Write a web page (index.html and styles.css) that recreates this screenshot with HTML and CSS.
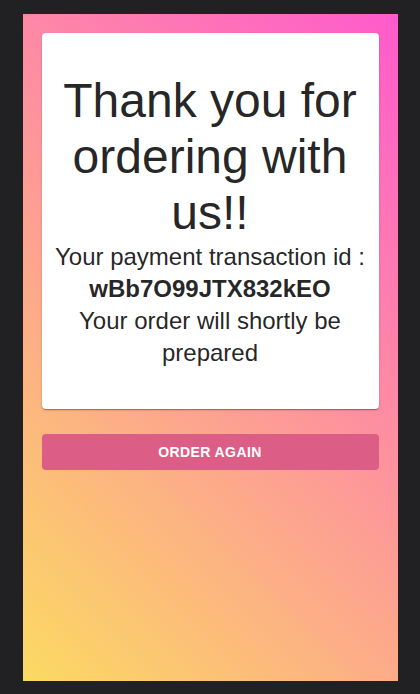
FILE: index.html
```html
<!DOCTYPE html>
<html lang="en">
<head>
<meta charset="utf-8">
<title>Thank you</title>
<link rel="stylesheet" href="styles.css">
</head>
<body>
  <div class="screen">
    <div class="card">
      <h1 class="title">Thank you for ordering with us!!</h1>
      <p class="info">Your payment transaction id :<br><strong class="txn">wBb7O99JTX832kEO</strong><br>Your order will shortly be prepared</p>
    </div>
    <button class="again" type="button">Order again</button>
  </div>
</body>
</html>
```
FILE: styles.css
```css
html, body {
  margin: 0;
  padding: 0;
}
body {
  background: #212124;
  height: 694px;
  display: flex;
  align-items: center;
  justify-content: center;
  font-family: "Liberation Sans", Arial, sans-serif;
}
.screen {
  width: 375px;
  height: 667px;
  box-sizing: border-box;
  padding: 19px;
  background: linear-gradient(45deg, #fbda61 0%, #ff5acd 100%);
  display: flex;
  flex-direction: column;
  margin-top: 1px;
}
.card {
  background: #fff;
  border-radius: 4px;
  box-shadow: 0 2px 1px -1px rgba(0,0,0,0.2), 0 1px 1px 0 rgba(0,0,0,0.14), 0 1px 3px 0 rgba(0,0,0,0.12);
  padding: 40px 8px;
  text-align: center;
  color: rgba(0,0,0,0.87);
}
.title {
  margin: 0;
  font-size: 48px;
  line-height: 56px;
  font-weight: 400;
}
.info {
  margin: 0;
  font-size: 24px;
  line-height: 32px;
  font-weight: 400;
}
.txn {
  font-weight: 700;
}
.again {
  margin-top: 25px;
  height: 36px;
  border: none;
  border-radius: 4px;
  background: #dc5e87;
  color: #fff;
  font-family: "Liberation Sans", Arial, sans-serif;
  font-size: 14px;
  font-weight: 700;
  letter-spacing: 0.4px;
  text-transform: uppercase;
  padding: 6px 16px;
}
```
